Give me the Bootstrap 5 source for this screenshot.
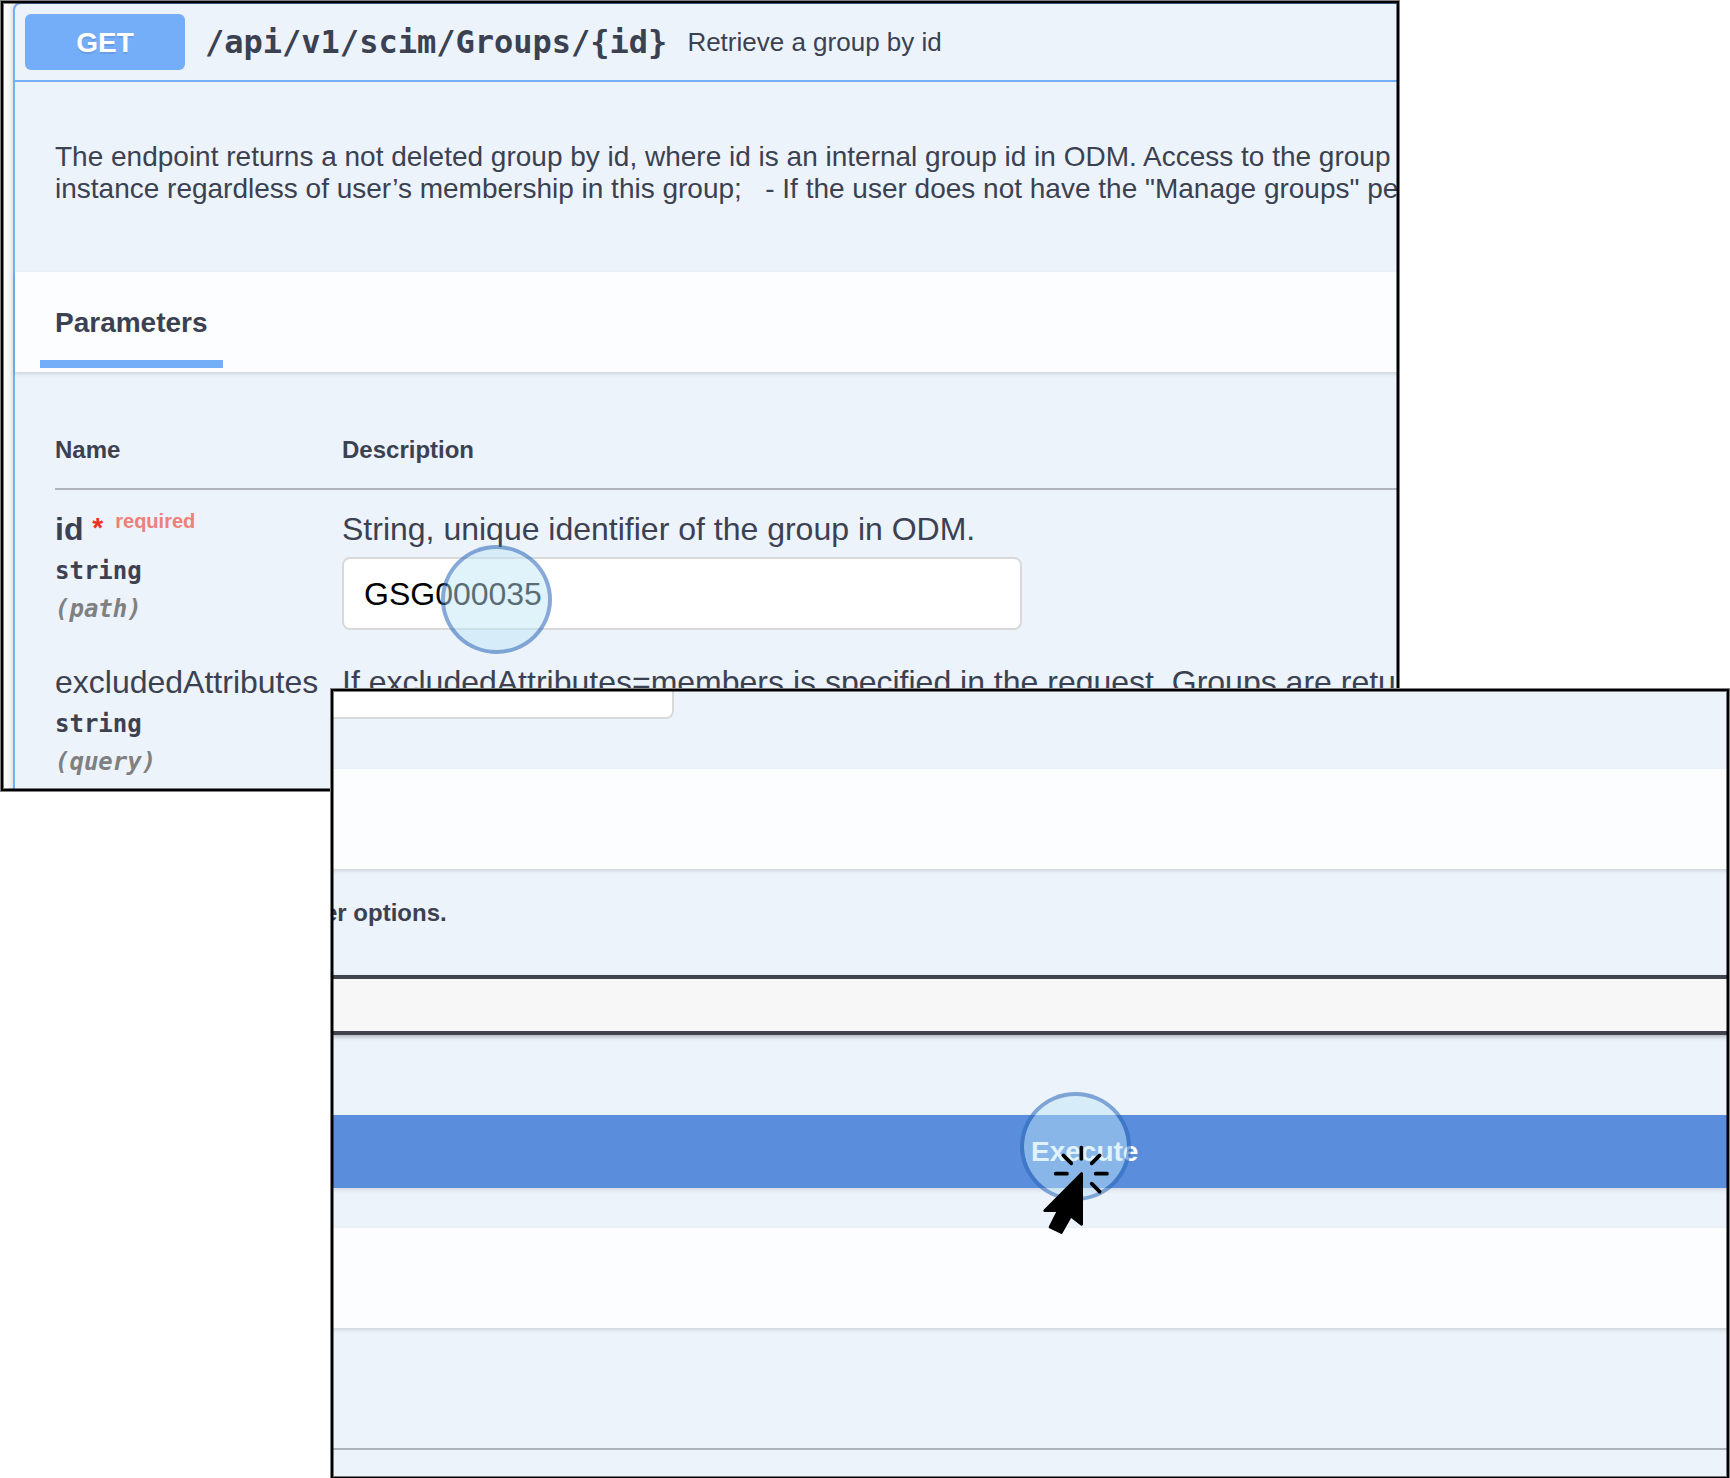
<!DOCTYPE html>
<html lang="en">
<head>
<meta charset="utf-8">
<title>Retrieve a group by id</title>
<link rel="stylesheet" href="https://cdn.jsdelivr.net/npm/bootstrap@5.3.0/dist/css/bootstrap.min.css">
<script src="https://cdn.jsdelivr.net/npm/bootstrap@5.3.0/dist/js/bootstrap.bundle.min.js"></script>
<style>
body{margin:0;background:#fff;color:#3b4151;font-family:"Liberation Sans",Arial,sans-serif}
.stage{width:1730px;height:1478px}
.shot{position:absolute;border:1px solid #808080;background:#fafafa}
/* frame drawn over the clipped content */
.shot::after{content:"";position:absolute;inset:0;z-index:5;pointer-events:none;box-shadow:inset 0 0 0 2px #000,inset 0 0 0 3px rgba(0,0,0,.5)}
.shot-a{left:0;top:0;width:1400px;height:792px;z-index:1}
.shot-b{left:330px;top:688px;width:1400px;height:792px;z-index:2;background:#ecf3fb}
.opblock{margin:1px 0 0 12px;width:1500px;height:900px;border:2px solid #74adf8;border-radius:8px;background:#ecf3fb;box-shadow:0 0 6px rgba(0,0,0,.19)}
.op-head{height:78px;padding:10px;gap:20px;border-bottom:2px solid #74adf8}
.method{width:160px;height:56px;border-radius:6px;background:#74adf8;font-size:28px;line-height:57px;text-shadow:0 2px 0 rgba(0,0,0,.1)}
.mono{font-family:"DejaVu Sans Mono",monospace}
.op-path{font-size:32px;line-height:40px}
.op-sum{font-size:26px;line-height:32px}
.op-desc{height:190px;padding:59px 0 0 40px;font-size:28px;line-height:32px;white-space:pre}
.section-bar{height:100px;background:#fcfdfe;box-shadow:0 2px 4px rgba(0,0,0,.13);position:relative}
.tab{width:183px;height:96px;margin-left:24.5px;padding:35px 0 0 15.5px;border-bottom:8px solid #74adf8;font-size:28px;line-height:32px}
.params{padding:64px 0 0 40px}
.param-head{padding-bottom:24px;margin-bottom:21px;border-bottom:2px solid #b0b3be;font-size:24px;line-height:28px}
.c-name{width:287px;flex:none}
.param{height:153px;font-size:32px;line-height:36px;white-space:nowrap}
.kind{font-size:24px;line-height:28px;margin-top:10px}
.place{color:#808080}
.star{font-size:28px;line-height:28px;color:#f1301f;position:relative;top:-3px}
.req{font-size:20px;line-height:20px;color:#ee8079;position:relative;top:-12px}
.field{width:680px;height:73px;margin-top:10px;padding:0 20px;border:2px solid #d9d9d9;border-radius:8px;font-size:32px;line-height:71px;color:#000;background:#fff}
.halo{position:absolute;width:111px;height:109px;border:4px solid rgba(43,104,184,.57);border-radius:50%;background:rgba(189,227,244,.475);background-clip:padding-box;z-index:3}
.halo-a{left:441px;top:545px}
.halo-b{left:1020px;top:1092px}
.field-end{width:343px;height:30px;border:2px solid #d9d9d9;border-top:0;border-left:0;border-radius:0 0 8px 0;background:#fff}
.bar-first{margin-top:50px}
.bar-second{margin-top:40px}
.note{height:106px;padding-top:30px;margin-left:-7px;font-size:24px;line-height:28px}
.select-box{height:60px;border:solid #41444e;border-width:4px 0;background:#f7f7f7;box-shadow:0 2px 4px rgba(0,0,0,.25)}
.execute{height:73px;margin-top:80px;padding-left:700px;background:#5b8ddd;box-shadow:0 2px 4px rgba(0,0,0,.1);font-size:28px;line-height:73px}
.table-top{height:122px;border-bottom:2px solid #adb2bd}
.pointer{position:absolute;left:980px;top:1070px;z-index:4}
</style>
</head>
<body>
<main class="stage position-relative overflow-hidden">
  <section class="shot shot-a overflow-hidden">
    <div class="opblock">
      <div class="op-head d-flex align-items-center text-nowrap">
        <div class="method text-white text-center fw-bold">GET</div>
        <div class="d-flex align-items-center">
          <span class="op-path mono fw-bold">/api/v1/scim/Groups/{id}</span>
          <span class="op-sum ps-3 ms-1">Retrieve a group by id</span>
        </div>
      </div>
      <div class="op-desc">The endpoint returns a not deleted group by id, where id is an internal group id in ODM. Access to the group
instance regardless of user’s membership in this group;   - If the user does not have the "Manage groups" pe</div>
      <div class="section-bar"><div class="tab fw-bold">Parameters</div></div>
      <div class="params">
        <div class="param-head d-flex fw-bold"><div class="c-name">Name</div><div>Description</div></div>
        <div class="param d-flex">
          <div class="c-name">
            <div class="fw-bold">id <span class="star">*</span><span class="req ms-2 ps-1">required</span></div>
            <div class="kind mono fw-bold">string</div>
            <div class="kind place mono fw-bold fst-italic">(path)</div>
          </div>
          <div><div>String, unique identifier of the group in ODM.</div><div class="field">GSG000035</div></div>
        </div>
        <div class="param d-flex">
          <div class="c-name">
            <div>excludedAttributes</div>
            <div class="kind mono fw-bold">string</div>
            <div class="kind place mono fw-bold fst-italic">(query)</div>
          </div>
          <div>If excludedAttributes=members is specified in the request, Groups are retu</div>
        </div>
      </div>
    </div>
  </section>
  <div class="halo halo-a"></div>

  <section class="shot shot-b overflow-hidden">
    <div class="field-end"></div>
    <div class="section-bar bar-first"></div>
    <div class="note fw-bold">er options.</div>
    <div class="select-box"></div>
    <div class="execute text-white fw-bold">Execute</div>
    <div class="section-bar bar-second"></div>
    <div class="table-top"></div>
  </section>
  <div class="halo halo-b"></div>
  <svg class="pointer" width="200" height="180" viewBox="0 0 600 540">
    <g stroke="#000" stroke-width="11" stroke-linecap="round" fill="none">
      <path d="M304 233V267M250 256L274 280M359 256L335 280M227 311H261M347 311H381M335 341L359 365"/>
    </g>
    <path d="M305 310V463L272 438L244 488L210 471L235 422H194Z" stroke="#000" stroke-width="8" stroke-linejoin="round"/>
  </svg>
</main>
</body>
</html>
